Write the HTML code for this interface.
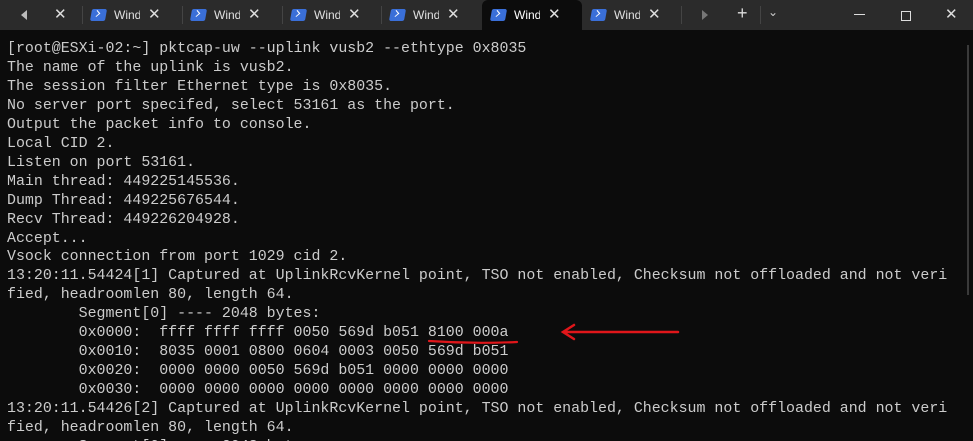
<!DOCTYPE html>
<html style="height:441px;overflow:hidden"><head><style>
body{margin:0;width:973px;height:441px;background:#0c0c0c;overflow:hidden;position:relative;font-family:"Liberation Sans",sans-serif}
.bar{position:absolute;left:0;top:0;width:973px;height:30px;background:#2b2b2b}
.tab{position:absolute;top:0;height:30px;color:#e0e0e0;font-size:12px}
.tab .ic{position:absolute;left:9px;top:9px;width:15px;height:12px;background:#3a6fd8;border-radius:2px;transform:skewX(-10deg)}
.tab .ic:after{content:"";position:absolute;left:3px;top:2px;width:4px;height:4px;border-right:1.5px solid #fff;border-bottom:1.5px solid #fff;transform:rotate(-45deg)}
.tab .t{position:absolute;left:32px;top:8px;width:26px;overflow:hidden;white-space:nowrap}
.tab .x{position:absolute;left:66px;top:5px;font-size:15px;color:#ddd}
.sep{position:absolute;top:6px;width:1px;height:18px;background:#444}
.term{position:absolute;left:7px;top:40px;font-family:"Liberation Mono",monospace;font-size:14.93px;line-height:18.95px;color:#cccccc;white-space:pre;margin:0}
</style></head><body>
<div class="bar"></div>
<div style="position:absolute;left:21px;top:10px;width:0;height:0;border-top:5px solid transparent;border-bottom:5px solid transparent;border-right:6px solid #bbb"></div>
<div style="position:absolute;left:54px;top:5px;font-size:15px;color:#ddd">✕</div>
<div class="sep" style="left:82px"></div>
<div class="tab" style="left:82px"><div class="ic"></div><div class="t">Windows</div><div class="x">✕</div></div>
<div class="sep" style="left:182px"></div>
<div class="tab" style="left:182px"><div class="ic"></div><div class="t">Windows</div><div class="x">✕</div></div>
<div class="sep" style="left:282px"></div>
<div class="tab" style="left:282px"><div class="ic"></div><div class="t">Windows</div><div class="x">✕</div></div>
<div class="sep" style="left:381px"></div>
<div class="tab" style="left:381px"><div class="ic"></div><div class="t">Windows</div><div class="x">✕</div></div>
<div style="position:absolute;left:482px;top:0;width:100px;height:30px;background:#0c0c0c;border-radius:6px 6px 0 0"></div>
<div class="tab" style="left:482px"><div class="ic"></div><div class="t" style="color:#fff">Windows</div><div class="x">✕</div></div>
<div class="tab" style="left:582px"><div class="ic"></div><div class="t">Windows</div><div class="x">✕</div></div>
<div class="sep" style="left:681px"></div>
<div style="position:absolute;left:702px;top:10px;width:0;height:0;border-top:5px solid transparent;border-bottom:5px solid transparent;border-left:6px solid #777"></div>
<div style="position:absolute;left:737px;top:3px;font-size:18px;color:#ddd">+</div>
<div class="sep" style="left:760px"></div>
<div style="position:absolute;left:768px;top:5px;font-size:12px;color:#ccc">⌄</div>
<div style="position:absolute;left:854px;top:14px;width:11px;height:1px;background:#ddd"></div>
<div style="position:absolute;left:901px;top:11px;width:8px;height:8px;border:1px solid #ddd"></div>
<div style="position:absolute;left:945px;top:5px;font-size:15px;color:#ddd">✕</div>
<div style="position:absolute;left:967px;top:45px;width:2px;height:250px;background:#3a3a3a"></div>
<pre class="term">[root@ESXi-02:~] pktcap-uw --uplink vusb2 --ethtype 0x8035
The name of the uplink is vusb2.
The session filter Ethernet type is 0x8035.
No server port specifed, select 53161 as the port.
Output the packet info to console.
Local CID 2.
Listen on port 53161.
Main thread: 449225145536.
Dump Thread: 449225676544.
Recv Thread: 449226204928.
Accept...
Vsock connection from port 1029 cid 2.
13:20:11.54424[1] Captured at UplinkRcvKernel point, TSO not enabled, Checksum not offloaded and not veri
fied, headroomlen 80, length 64.
        Segment[0] ---- 2048 bytes:
        0x0000:  ffff ffff ffff 0050 569d b051 8100 000a
        0x0010:  8035 0001 0800 0604 0003 0050 569d b051
        0x0020:  0000 0000 0050 569d b051 0000 0000 0000
        0x0030:  0000 0000 0000 0000 0000 0000 0000 0000
13:20:11.54426[2] Captured at UplinkRcvKernel point, TSO not enabled, Checksum not offloaded and not veri
fied, headroomlen 80, length 64.
        Segment[0] ---- 2048 bytes:</pre>
<svg style="position:absolute;left:0;top:0" width="973" height="441">
<path d="M429 341 Q473 344 517 342" stroke="#e0161a" stroke-width="2.2" fill="none" stroke-linecap="round"/>
<path d="M565 332 L678 332 M574 325 L563 332 L574 339" stroke="#e0161a" stroke-width="2.5" fill="none" stroke-linecap="round"/>
</svg>
</body></html>
